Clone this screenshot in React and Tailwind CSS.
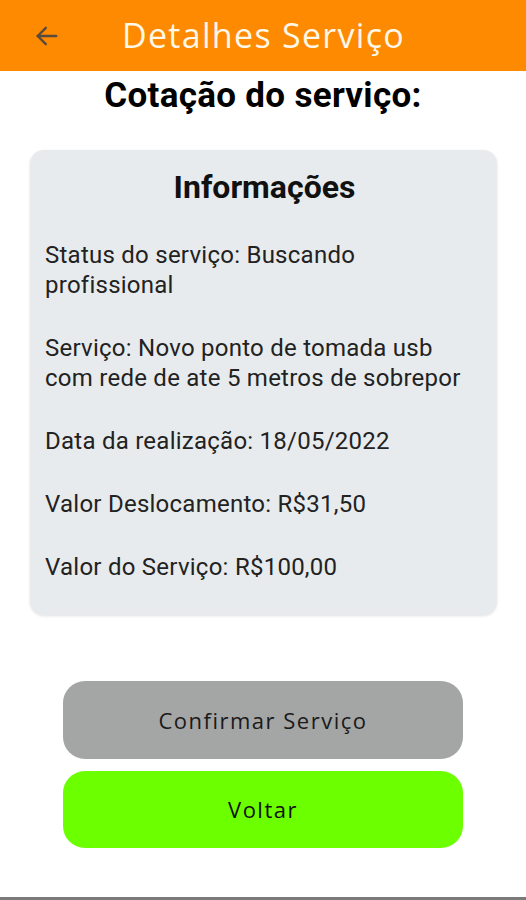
import React from "react";

export default function App() {
  const items = [
    "Status do serviço: Buscando profissional",
    "Serviço: Novo ponto de tomada usb com rede de ate 5 metros de sobrepor",
    "Data da realização: 18/05/2022",
    "Valor Deslocamento: R$31,50",
    "Valor do Serviço: R$100,00",
  ];
  return (
    <div className="w-[526px] h-[900px] bg-white flex flex-col relative overflow-hidden" style={{ fontFamily: "Roboto, sans-serif" }}>
      <div className="h-[71px] bg-[#fd8a00] flex items-center shrink-0">
        <div className="w-[122px] flex pl-[33px]">
          <svg width="28" height="28" viewBox="0 0 24 24" fill="none" stroke="#574a3e" strokeWidth="2" strokeLinecap="round" strokeLinejoin="round">
            <path d="M20 12H4" />
            <path d="M11 5l-7 7 7 7" />
          </svg>
        </div>
        <div className="text-[34px] text-[#fff7e8] tracking-[1.3px] leading-none mb-[2px]" style={{ fontFamily: "'Open Sans', sans-serif" }}>
          Detalhes Serviço
        </div>
      </div>
      <div className="text-center font-bold text-[35px] text-black leading-none mt-[7px] tracking-[0.3px]">Cotação do serviço:</div>
      <div className="mx-[30px] w-[467px] mt-[37px] h-[465px] bg-[#e8ebed] rounded-[14px] shadow-[0_1px_3px_rgba(0,0,0,0.12)] pl-[15px] pr-[18px] pt-[21px]">
        <div className="text-center font-bold text-[32px] text-[#111] leading-[32px] pl-[5px]">Informações</div>
        <div className="mt-[37px] flex flex-col gap-[33px] text-[24px] leading-[30px] text-[#222] tracking-[0.25px]">
          {items.map((t) => (
            <div key={t}>{t}</div>
          ))}
        </div>
      </div>
      <div className="mt-[66px] mx-[63px] flex flex-col gap-[12px]" style={{ fontFamily: "'Open Sans', sans-serif" }}>
        <button className="h-[78px] rounded-[22px] bg-[#a4a5a5] text-[22px] text-[#1a1a1a] tracking-[1.5px]">Confirmar Serviço</button>
        <button className="h-[77px] rounded-[22px] bg-[#6cff00] text-[22px] text-[#111] tracking-[1.5px]">Voltar</button>
      </div>
      <div className="absolute bottom-0 left-0 right-0 h-[3px] bg-[#7a7a7a]"></div>
    </div>
  );
}
